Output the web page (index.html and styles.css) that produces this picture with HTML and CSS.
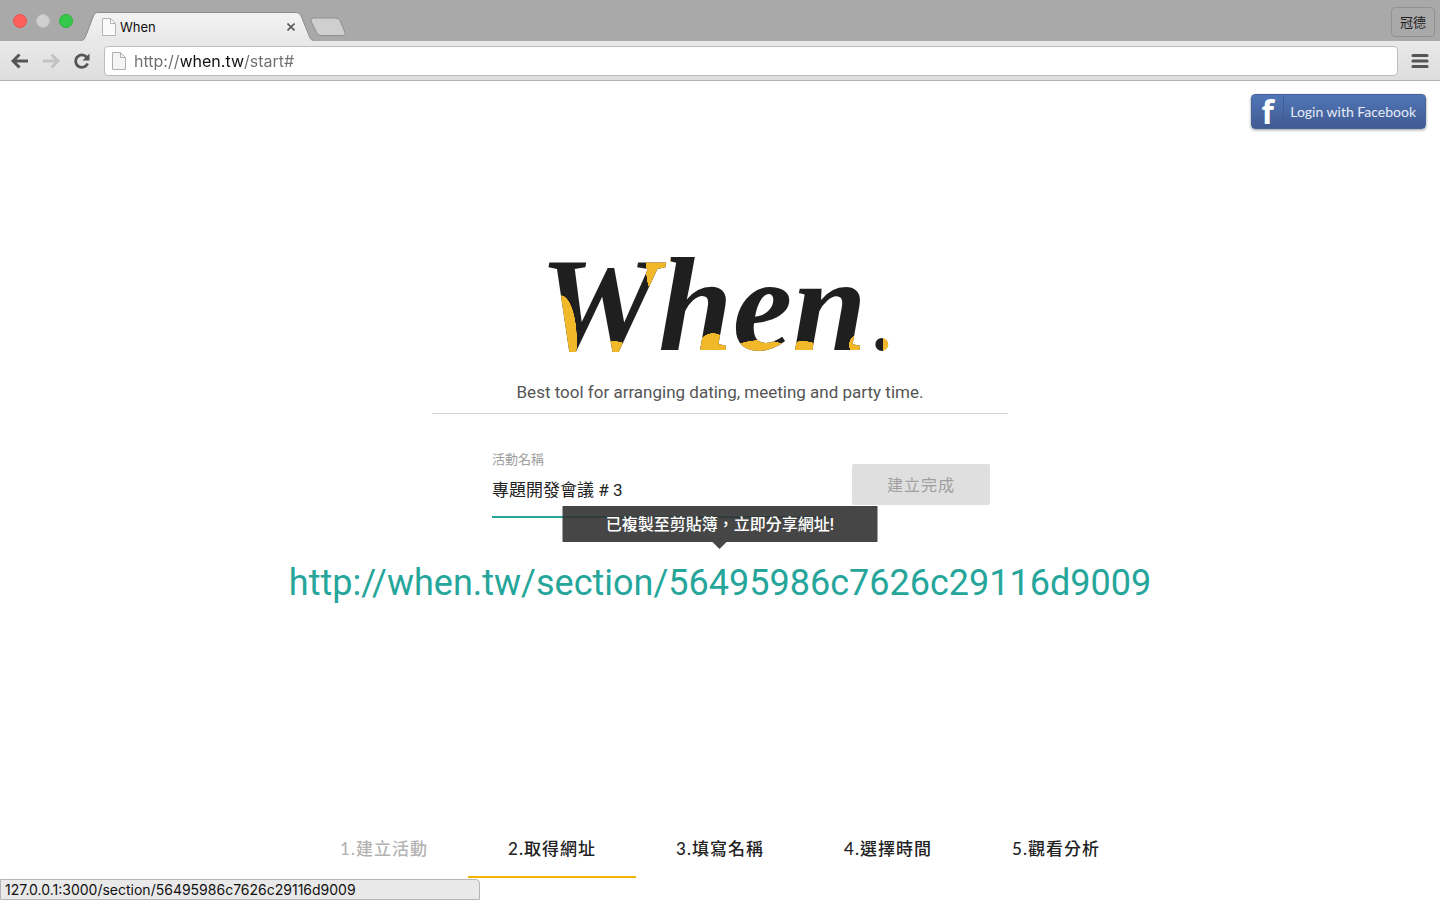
FILE: index.html
```html
<!DOCTYPE html>
<html lang="zh-Hant">

<head>
    <meta charset="utf-8">
    <title>When</title>
    <link rel="stylesheet" href="styles.css">
</head>

<body>
    <header class="browser">
        <div class="tab-bar">
            <div class="lights">
                <span class="light light-red"></span>
                <span class="light"></span>
                <span class="light light-green"></span>
            </div>
            <div class="tab">
                <svg class="tab-shape" viewBox="0 0 236 29" aria-hidden="true">
                    <defs>
                        <linearGradient id="tabFill" x1="0" y1="0" x2="0" y2="1">
                            <stop offset="0" stop-color="#f3f3f3" />
                            <stop offset="1" stop-color="#e8e8e8" />
                        </linearGradient>
                    </defs>
                    <path d="M0 28.5C4 28 4 25 6 21L12 5C13.5 1.5 14.5 .5 18 .5H214C217.5 .5 219 1.5 220.5 5L227 21C229 26 229 28 233 28.5V29H0Z" fill="url(#tabFill)" />
                    <path d="M0 28.5C4 28 4 25 6 21L12 5C13.5 1.5 14.5 .5 18 .5H214C217.5 .5 219 1.5 220.5 5L227 21C229 26 229 28 233 28.5" fill="none" stroke="#8b8b8b" />
                </svg>
                <svg class="page-icon" viewBox="0 0 14 18" aria-hidden="true">
                    <path d="M.5 .5h8l5 5v12H.5z" fill="#fafafa" stroke="#b4b4b4" />
                    <path d="M8.5 .5v5h5" fill="none" stroke="#b4b4b4" />
                </svg>
                <span class="tab-title">When</span>
                <button type="button" class="tab-close" aria-label="Close tab">
                    <svg viewBox="0 0 8 8" width="8" height="8"><path d="M.5 .5l7 7M7.5 .5l-7 7" stroke="#5a5a5a" stroke-width="1.6" /></svg>
                </button>
            </div>
            <button type="button" class="new-tab" aria-label="New tab">
                <svg viewBox="0 0 38 20" width="38" height="20"><path d="M4 1H27Q30 1 31 3.500L36 15.500Q37 18.500 34 18.500H12Q9 18.500 7.500 15.500L2 4Q1 1 4 1Z" fill="#cfcfcf" stroke="#8e8e8e" /></svg>
            </button>
            <button type="button" class="profile">冠德</button>
        </div>
        <div class="toolbar">
            <button type="button" class="tool" aria-label="Back">
                <svg viewBox="0 0 18 16" width="18" height="16"><path d="M17 8H3M8.500 1.500L2 8L8.500 14.500" fill="none" stroke="#555" stroke-width="3" /></svg>
            </button>
            <button type="button" class="tool" aria-label="Forward">
                <svg viewBox="0 0 18 16" width="18" height="16"><path d="M1 8H15M9.500 1.500L16 8L9.500 14.500" fill="none" stroke="#c3c3c3" stroke-width="3" /></svg>
            </button>
            <button type="button" class="tool" aria-label="Reload">
                <svg viewBox="0 0 18 16" width="18" height="16"><path d="M13.500 4A6.200 6.200 0 1 0 14.600 10.500" fill="none" stroke="#555" stroke-width="2.800" /><path d="M16.500 .5V7.500H9.500Z" fill="#555" /></svg>
            </button>
            <div class="address">
                <svg class="page-icon" viewBox="0 0 14 18" aria-hidden="true">
                    <path d="M.5 .5h8l5 5v12H.5z" fill="#f4f4f4" stroke="#b0b0b0" />
                    <path d="M8.5 .5v5h5" fill="none" stroke="#b0b0b0" />
                </svg>
                <input type="text" class="address-input" aria-label="Address" value="http://when.tw/start#">
            </div>
            <button type="button" class="tool menu" aria-label="Menu">
                <svg viewBox="0 0 18 16" width="18" height="16"><path d="M2 2.500H16M2 8H16M2 13.500H16" stroke="#555" stroke-width="3.200" stroke-linecap="round" /></svg>
            </button>
        </div>
    </header>

    <div class="login">
        <button type="button" class="fb-button">
            <span class="fb-icon" aria-hidden="true">f</span>
            <span class="fb-label">Login with Facebook</span>
        </button>
    </div>

    <main class="content">
        <div class="intro">
            <h1 class="logo"><span class="logo-word">When</span><span class="logo-dot">.</span></h1>
            <p class="tagline">Best tool for arranging dating, meeting and party time.</p>
        </div>
        <form class="event-form">
            <div class="field">
                <label for="eventName">活動名稱</label>
                <input type="text" id="eventName" value="專題開發會議 # 3">
            </div>
            <button type="submit" class="create" disabled>建立完成</button>
        </form>
        <div class="share">
            <div class="tooltip" role="status">已複製至剪貼簿，立即分享網址!</div>
            <a class="share-link" href="#">http://when.tw/section/56495986c7626c29116d9009</a>
        </div>
    </main>

    <nav class="steps">
        <a href="#" class="step done">1.建立活動</a>
        <a href="#" class="step active">2.取得網址</a>
        <a href="#" class="step">3.填寫名稱</a>
        <a href="#" class="step">4.選擇時間</a>
        <a href="#" class="step">5.觀看分析</a>
    </nav>

    <div class="status-bar">127.0.0.1:3000/section/56495986c7626c29116d9009</div>
</body>

</html>
```

FILE: styles.css
```css
* {
    box-sizing: border-box;
}

body {
    display: flex;
    flex-direction: column;
    min-height: 100vh;
    margin: 0;
    background: #fff;
    color: #222;
    font-family: Roboto, "Noto Sans CJK TC", sans-serif;
}

button {
    padding: 0;
    border: none;
    background: none;
    font-family: inherit;
    cursor: pointer;
}

svg {
    display: block;
}

/* browser window */
.tab-bar {
    display: flex;
    align-items: flex-end;
    height: 41px;
    padding: 0 5px 0 13px;
    background: #a9a9a9;
}

.lights {
    display: flex;
    gap: 9px;
    padding-bottom: 13px;
}

.light {
    width: 14px;
    height: 14px;
    border: 1px solid #bfbfbf;
    border-radius: 50%;
    background: #d0d0d0;
}

.light-red {
    border-color: #e9524c;
    background: #fd605b;
}

.light-green {
    border-color: #28b53b;
    background: #34c94a;
}

.tab {
    position: relative;
    display: flex;
    align-items: center;
    width: 236px;
    height: 29px;
    margin-left: 8px;
    padding: 0 22px 0 21px;
}

.tab-shape {
    position: absolute;
    inset: 0;
    width: 100%;
    height: 100%;
}

.page-icon {
    position: relative;
    flex: none;
    width: 14px;
    height: 18px;
}

.tab-title {
    position: relative;
    flex: 1;
    padding-left: 4px;
    color: #111;
    font: 13px Inter, sans-serif;
}

.tab-close {
    position: relative;
}

.new-tab {
    margin-left: -8px;
    padding-bottom: 4px;
}

.profile {
    width: 44px;
    height: 30px;
    margin: 0 0 4px auto;
    padding-bottom: 2px;
    border: 1px solid #929292;
    border-radius: 4px;
    color: #222;
    font-size: 13px;
}

.toolbar {
    display: flex;
    align-items: center;
    gap: 13px;
    height: 40px;
    padding: 0 11px;
    border-bottom: 1px solid #b0b0b0;
    background: linear-gradient(#e9e9e9, #dedede);
}

.address {
    display: flex;
    flex: 1;
    align-items: center;
    height: 30px;
    padding: 0 7px;
    border: 1px solid #bdbdbd;
    border-radius: 4px;
    background: #fff;
}

/* only the host name is dark */
.address-input {
    flex: 1;
    margin-left: 8px;
    padding: 0;
    border: none;
    outline: none;
    background: linear-gradient(to right, #6f6f6f 47px, #111 47px, #111 110px, #6f6f6f 110px);
    background-clip: text;
    -webkit-background-clip: text;
    -webkit-text-fill-color: transparent;
    font: 16px Inter, sans-serif;
}

/* page */
.login {
    display: flex;
    justify-content: flex-end;
    padding: 13px 14px 0;
}

.fb-button {
    display: flex;
    align-items: center;
    height: 35px;
    border: 1px solid #44629c;
    border-radius: 4px;
    background: linear-gradient(#5076b6, #415a93);
    box-shadow: 0 1px 3px rgba(0, 0, 0, 0.4);
    color: #fff;
}

.fb-icon {
    width: 32px;
    border-right: 1px solid #3f5c96;
    font: bold 32px/33px "Open Sans", sans-serif;
    text-align: center;
}

.fb-label {
    padding: 0 9px 0 6px;
    color: #e6ecf7;
    font: 14px Lato, sans-serif;
}

.content {
    display: flex;
    flex: 1;
    flex-direction: column;
    align-items: center;
    padding-top: 108px;
}

.intro {
    width: 40%;
    border-bottom: 1px solid #d4d4d4;
    text-align: center;
}

.logo {
    display: flex;
    align-items: baseline;
    justify-content: center;
    margin: 0;
    font: italic bold 134px/136px "Liberation Serif", serif;
}

/* yellow patches show through the dark letters */
.logo-word {
    padding: 0 4px;
    background:
        radial-gradient(ellipse 16px 46px at 26px 104px, #f1b82a 98%, transparent),
        radial-gradient(ellipse 20px 12px at 78px 116px, #f1b82a 98%, transparent),
        radial-gradient(ellipse 13px 30px at 124px 32px, #f1b82a 98%, transparent),
        radial-gradient(ellipse 18px 22px at 178px 118px, #f1b82a 98%, transparent),
        radial-gradient(ellipse 32px 14px at 226px 117px, #f1b82a 98%, transparent),
        radial-gradient(ellipse 20px 12px at 268px 116px, #f1b82a 98%, transparent),
        radial-gradient(ellipse 12px 12px at 326px 108px, #f1b82a 98%, transparent),
        #1f1f1f;
    background-clip: text;
    -webkit-background-clip: text;
    color: transparent;
}

.logo-dot {
    margin-left: 4px;
    padding-right: 10px;
    background: linear-gradient(to right, #1f1f1f 8px, #f1b82a 8px);
    background-clip: text;
    -webkit-background-clip: text;
    color: transparent;
    font-size: 80px;
    line-height: 80px;
}

.tagline {
    margin: 0;
    padding: 7px 0 9px;
    color: #555;
    font-size: 17px;
    line-height: 24px;
}

.event-form {
    display: flex;
    align-items: flex-start;
    justify-content: space-between;
    width: 40%;
    padding: 36px 18px 0 60px;
}

.field {
    display: flex;
    flex-direction: column;
    width: 340px;
}

.field label {
    color: #9e9e9e;
    font-size: 13px;
    line-height: 20px;
}

.field input {
    height: 48px;
    padding: 0 0 10px;
    border: none;
    border-bottom: 2px solid #26a69a;
    outline: none;
    color: #222;
    font: 17px Roboto, "Noto Sans CJK TC", sans-serif;
}

.create {
    width: 138px;
    height: 41px;
    margin-top: 14px;
    padding-bottom: 2px;
    border-radius: 2px;
    background: #dfdfdf;
    color: #9f9f9f;
    font-size: 16px;
    letter-spacing: 1px;
}

.share {
    position: relative;
    padding-top: 41px;
}

.tooltip {
    position: absolute;
    top: -12px;
    left: 50%;
    width: 315px;
    padding-top: 1px;
    transform: translateX(-50%);
    background: rgba(50, 50, 50, 0.9);
    color: #fff;
    font-size: 16px;
    font-weight: 500;
    line-height: 35px;
    text-align: center;
}

.tooltip::after {
    content: "";
    position: absolute;
    top: 100%;
    left: 50%;
    margin-left: -7px;
    border: 7px solid transparent;
    border-top-color: #474747;
    border-bottom: none;
}

.share-link {
    color: #26a69a;
    font-size: 36px;
    line-height: 48px;
    text-decoration: none;
}

.steps {
    display: flex;
    justify-content: center;
    padding-bottom: 22px;
}

.step {
    width: 168px;
    border-bottom: 2px solid transparent;
    color: #222;
    font: 500 17px/54px Lato, "Noto Sans CJK TC", sans-serif;
    letter-spacing: 1px;
    text-align: center;
    text-decoration: none;
}

.step.done {
    color: #b3b3b3;
}

.step.active {
    border-color: #f4b400;
}

.status-bar {
    position: fixed;
    bottom: 0;
    left: 0;
    width: 480px;
    height: 21px;
    padding-left: 4px;
    border: 1px solid #b5b5b5;
    border-radius: 0 4px 0 0;
    background: #e9e9e9;
    color: #111;
    font: 14px/19px Inter, sans-serif;
}
```
